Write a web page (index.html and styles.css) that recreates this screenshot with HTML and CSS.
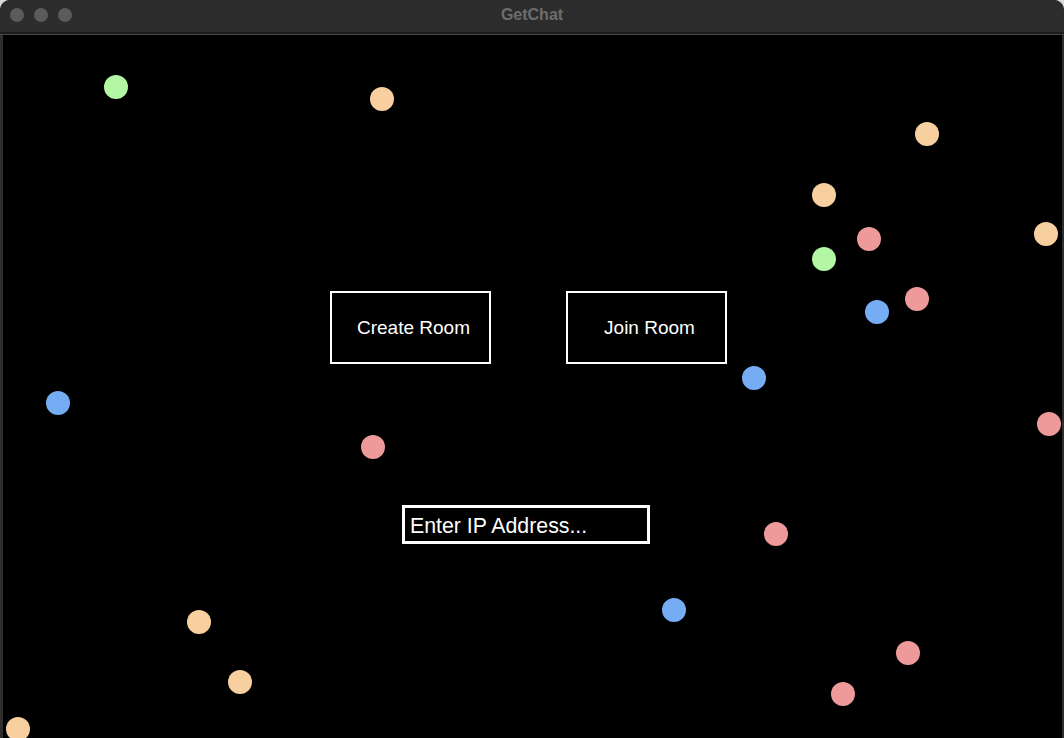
FILE: index.html
```html
<!DOCTYPE html>
<html lang="en">
<head>
<meta charset="utf-8">
<title>GetChat</title>
<link rel="stylesheet" href="styles.css">
</head>
<body>
<div class="window">
  <header class="titlebar">
    <div class="lights">
      <span class="light"></span>
      <span class="light"></span>
      <span class="light"></span>
    </div>
    <div class="title">GetChat</div>
  </header>
  <main class="canvas">
    <span class="dot green" style="left:101px;top:40px"></span>
    <span class="dot peach" style="left:367px;top:52px"></span>
    <span class="dot peach" style="left:912px;top:87px"></span>
    <span class="dot peach" style="left:809px;top:148px"></span>
    <span class="dot peach" style="left:1031px;top:187px"></span>
    <span class="dot pink" style="left:854px;top:192px"></span>
    <span class="dot green" style="left:809px;top:212px"></span>
    <span class="dot pink" style="left:902px;top:252px"></span>
    <span class="dot blue" style="left:862px;top:265px"></span>
    <span class="dot blue" style="left:739px;top:331px"></span>
    <span class="dot blue" style="left:43px;top:356px"></span>
    <span class="dot pink" style="left:1034px;top:377px"></span>
    <span class="dot pink" style="left:358px;top:400px"></span>
    <span class="dot pink" style="left:761px;top:487px"></span>
    <span class="dot blue" style="left:659px;top:563px"></span>
    <span class="dot peach" style="left:184px;top:575px"></span>
    <span class="dot pink" style="left:893px;top:606px"></span>
    <span class="dot peach" style="left:225px;top:635px"></span>
    <span class="dot pink" style="left:828px;top:647px"></span>
    <span class="dot peach" style="left:3px;top:682px"></span>

    <div class="controls">
      <div class="buttons">
        <button class="btn btn-create">Create Room</button>
        <button class="btn btn-join">Join Room</button>
      </div>
      <input class="ip" type="text" placeholder="Enter IP Address...">
    </div>
  </main>
</div>
</body>
</html>
```

FILE: styles.css
```css
* { box-sizing: border-box; }

html, body {
  margin: 0;
  padding: 0;
  width: 1064px;
  height: 738px;
  overflow: hidden;
  background: #d9d9d9;
}

.window {
  width: 1064px;
  height: 738px;
  display: flex;
  flex-direction: column;
  background: #2e2e2e;
  border-radius: 10px 10px 0 0;
  overflow: hidden;
  padding: 0 2px 0 3px;
}

.titlebar {
  position: relative;
  height: 35px;
  flex: 0 0 35px;
  margin: 0 -2px 0 -3px;
  background: #2c2c2c;
  border-bottom: 1px solid #484848;
  box-shadow: inset 0 -2px 0 #1b1b1b;
  display: flex;
  align-items: center;
  justify-content: center;
}

.lights {
  position: absolute;
  left: 10px;
  top: 8px;
  display: flex;
  gap: 10px;
}

.light {
  width: 14px;
  height: 14px;
  border-radius: 50%;
  background: #5b5b5b;
}

.title {
  font-family: "Liberation Sans", Arial, sans-serif;
  font-weight: bold;
  font-size: 16px;
  color: #6d6d6d;
  margin-top: -5px;
  margin-left: 0;
}

.canvas {
  position: relative;
  flex: 1;
  background: #000;
  overflow: hidden;
}

.dot {
  position: absolute;
  width: 24px;
  height: 24px;
  border-radius: 50%;
}

.green { background: #b3f6a3; }
.peach { background: #f8cf9f; }
.pink  { background: #ef9a9a; }
.blue  { background: #75adf5; }

.controls {
  position: relative;
  padding-top: 256px;
  padding-left: 327px;
  display: flex;
  flex-direction: column;
  align-items: flex-start;
}

.buttons {
  display: flex;
  gap: 75px;
}

.btn {
  width: 161px;
  height: 73px;
  background: #000;
  border: 2px solid #fff;
  color: #fff;
  font-family: "Liberation Sans", Arial, sans-serif;
  font-size: 19px;
  padding: 0 0 0 6px;
  margin: 0;
  cursor: pointer;
}

.ip {
  margin-top: 141px;
  margin-left: 72px;
  width: 248px;
  height: 39px;
  background: #000;
  border: 3px solid #fff;
  color: #fff;
  font-family: "Liberation Sans", Arial, sans-serif;
  font-size: 21.3px;
  padding: 3px 0 0 5px;
  outline: none;
}

.ip::placeholder {
  color: #fff;
  opacity: 1;
}
```
